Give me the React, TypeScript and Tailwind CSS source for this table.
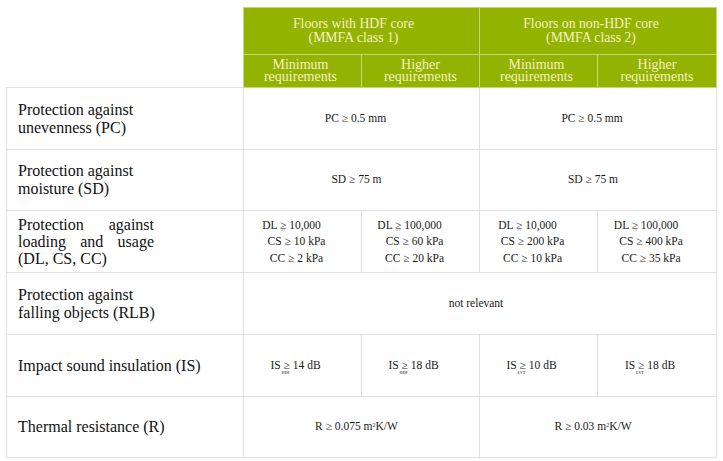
import React from 'react';

const serif = { fontFamily: '"Liberation Serif", "DejaVu Serif", serif' };

const head = 'bg-[#93b300] text-[#f3f0c6] text-center font-normal border border-[#c4d77a] p-0';
const cell = 'border border-[#e0e0e0] text-center align-middle text-[#1a1a1a] text-[11.5px] p-0';
const label = 'border border-[#e0e0e0] align-middle text-left text-[#111] text-[16px] leading-[18px] pl-[11px] pr-2';

function Loads({ dl, cs, cc, sub }: { dl: string; cs: string; cc: string; sub: string }) {
  return (
    <div className="leading-[16.5px] pr-[12px]">
      <div className="pr-[10px]">
        DL <span className="relative">≥<span className="absolute left-[1px] top-[9px] text-[4px] leading-none text-[#666]">{sub}</span></span> {dl}
      </div>
      <div>CS ≥ {cs}</div>
      <div>CC ≥ {cc}</div>
    </div>
  );
}

function Impact({ v, sub }: { v: string; sub: string }) {
  return (
    <div className="pr-[14px]">
      IS <span className="relative">≥<span className="absolute -left-[2px] top-[12px] text-[4px] leading-none font-bold text-[#666]">{sub}</span></span> {v} dB
    </div>
  );
}

export default function App() {
  return (
    <div className="w-[723px] h-[461px] bg-white pl-[6px] pt-[7px]" style={serif}>
      <table className="table-fixed border-collapse w-[710px]">
        <colgroup>
          <col className="w-[237px]" />
          <col className="w-[118px]" />
          <col className="w-[118px]" />
          <col className="w-[118px]" />
          <col className="w-[119px]" />
        </colgroup>
        <thead>
          <tr className="h-[47px]">
            <th className="p-0" />
            <th colSpan={2} className={`${head} text-[13.75px] leading-[14px] pr-[16px]`}>Floors with HDF core<br />(MMFA class 1)</th>
            <th colSpan={2} className={`${head} text-[13.75px] leading-[14px] pr-[14px]`}>Floors on non-HDF core<br />(MMFA class 2)</th>
          </tr>
          <tr className="h-[33px]">
            <th className="p-0" />
            <th className={`${head} text-[14px] leading-[12.5px] pr-[4px]`}>Minimum<br />requirements</th>
            <th className={`${head} text-[14px] leading-[12.5px]`}>Higher<br />requirements</th>
            <th className={`${head} text-[14px] leading-[12.5px] pr-[4px]`}>Minimum<br />requirements</th>
            <th className={`${head} text-[14px] leading-[12.5px]`}>Higher<br />requirements</th>
          </tr>
        </thead>
        <tbody>
          <tr className="h-[62px]">
            <td className={label}>Protection against<br />unevenness (PC)</td>
            <td colSpan={2} className={`${cell} pr-[12px]`}>PC ≥ 0.5 mm</td>
            <td colSpan={2} className={`${cell} pr-[12px]`}>PC ≥ 0.5 mm</td>
          </tr>
          <tr className="h-[61px]">
            <td className={label}>Protection against<br />moisture (SD)</td>
            <td colSpan={2} className={`${cell} pr-[10px]`}>SD ≥ 75 m</td>
            <td colSpan={2} className={`${cell} pr-[10px]`}>SD ≥ 75 m</td>
          </tr>
          <tr className="h-[62px]">
            <td className={label}>
              <div className="w-[136px] leading-[17px]">
                <div className="flex justify-between"><span>Protection</span><span>against</span></div>
                <div className="flex justify-between"><span>loading</span><span>and</span><span>usage</span></div>
                <div>(DL, CS, CC)</div>
              </div>
            </td>
            <td className={cell}><Loads dl="10,000" cs="10 kPa" cc="2 kPa" sub="25" /></td>
            <td className={cell}><Loads dl="100,000" cs="60 kPa" cc="20 kPa" sub="25" /></td>
            <td className={cell}><Loads dl="10,000" cs="200 kPa" cc="10 kPa" sub="75" /></td>
            <td className={cell}><Loads dl="100,000" cs="400 kPa" cc="35 kPa" sub="75" /></td>
          </tr>
          <tr className="h-[62px]">
            <td className={label}>Protection against<br />falling objects (RLB)</td>
            <td colSpan={4} className={`${cell} pr-[8px]`}>not relevant</td>
          </tr>
          <tr className="h-[62px]">
            <td className={label}>Impact sound insulation (IS)</td>
            <td className={cell}><Impact v="14" sub="HDF" /></td>
            <td className={cell}><Impact v="18" sub="HDF" /></td>
            <td className={cell}><Impact v="10" sub="LVT" /></td>
            <td className={cell}><Impact v="18" sub="LVT" /></td>
          </tr>
          <tr className="h-[61px]">
            <td className={label}>Thermal resistance (R)</td>
            <td colSpan={2} className={`${cell} pr-[10px]`}>R ≥ 0.075 m<sup className="text-[6px]">2</sup>K/W</td>
            <td colSpan={2} className={`${cell} pr-[10px]`}>R ≥ 0.03 m<sup className="text-[6px]">2</sup>K/W</td>
          </tr>
        </tbody>
      </table>
    </div>
  );
}
